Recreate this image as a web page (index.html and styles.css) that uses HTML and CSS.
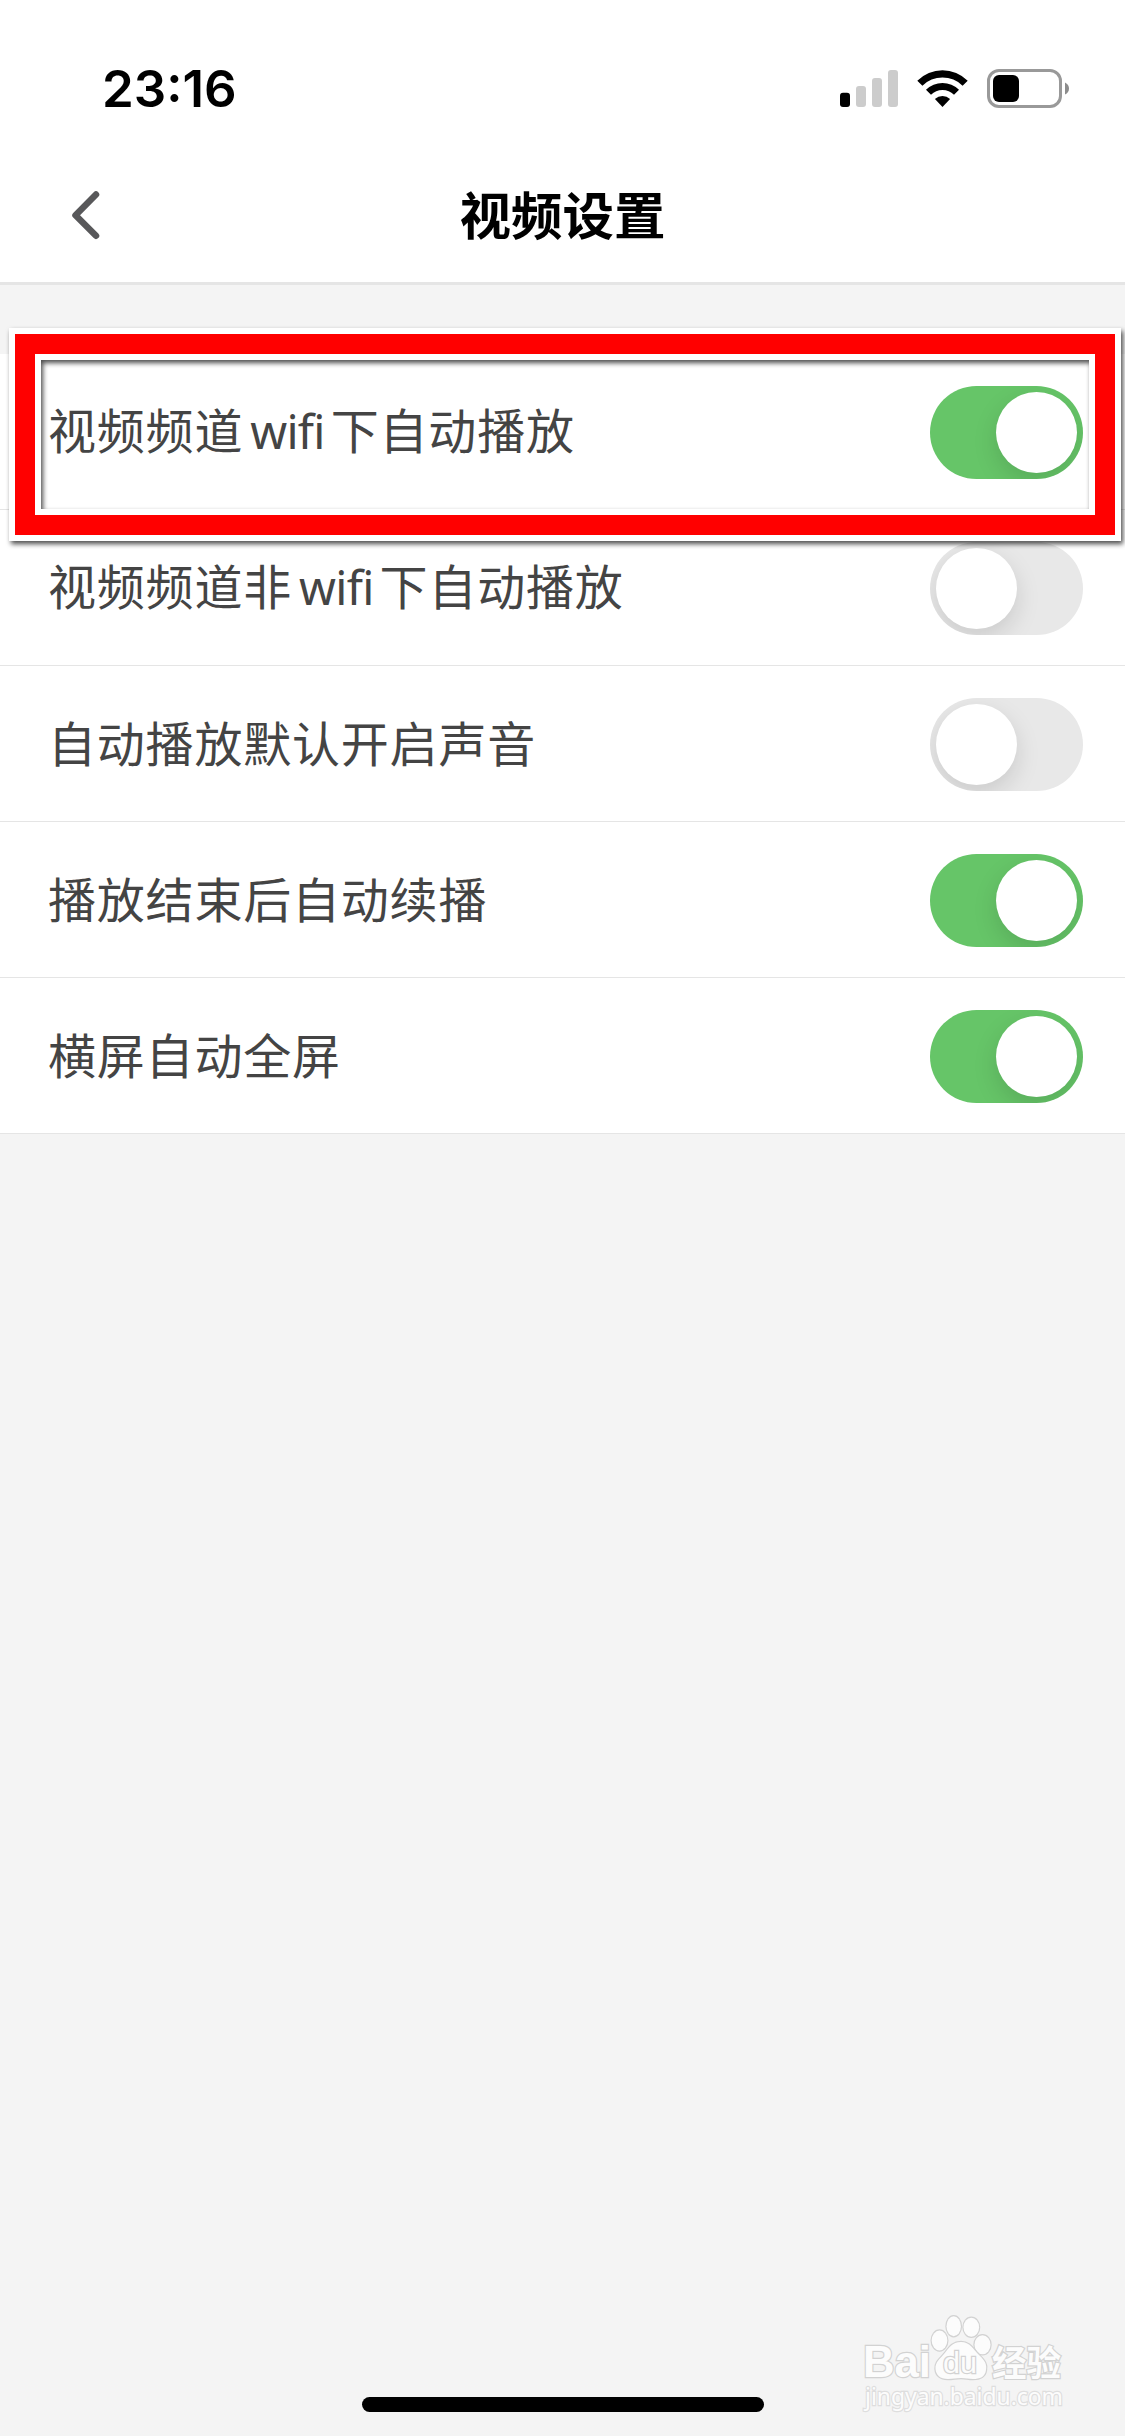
FILE: index.html
```html
<!DOCTYPE html>
<html lang="zh-CN">
<head>
<meta charset="utf-8">
<title>视频设置</title>
<link rel="stylesheet" href="styles.css">
</head>
<body>
<div class="screen">
  <header class="header">
    <div class="status">
      <span class="time">23:16</span>
      <svg class="status-icons" viewBox="0 0 230 40" aria-hidden="true">
        <rect x="0" y="23.7" width="10" height="14.3" rx="3"/>
        <g fill="#ccc">
          <rect x="16" y="17" width="10" height="21" rx="3"/>
          <rect x="32" y="9" width="10" height="29" rx="3"/>
          <rect x="48" y="1" width="10" height="37" rx="3"/>
        </g>
        <path d="M77.300 11.700A35.500 35.500 0 0 1 127.700 11.700L122.600 16.700A28.500 28.500 0 0 0 82.400 16.700Z"/>
        <path d="M86 20.800A23.500 23.500 0 0 1 119 20.800L114 25.800A16.300 16.300 0 0 0 91 25.800Z"/>
        <path d="M94.900 29.900A11.500 11.500 0 0 1 110.100 29.900L102.500 37.900Z"/>
        <rect x="148.500" y="1.500" width="72" height="36" rx="10.500" fill="none" stroke="#999" stroke-width="3"/>
        <rect x="153" y="6" width="26" height="27" rx="6"/>
        <path d="M225 13.500Q229 15.500 229 19.500T225 25.500Z" fill="#8c8c8c"/>
      </svg>
    </div>
    <div class="nav">
      <svg class="back" viewBox="0 0 40 60" aria-hidden="true"><path d="M29 9.500L8.500 30.200L29 50.800"/></svg>
      <h1 class="title">视频设置</h1>
      <span></span>
    </div>
  </header>

  <main class="list">
    <div class="row">
      <span class="label">视频频道<span class="latin">wifi</span>下自动播放</span>
      <span class="switch switch-on"></span>
      <div class="marker"><div class="marker-band"><div class="marker-inner"></div></div></div>
    </div>
    <div class="row">
      <span class="label">视频频道非<span class="latin">wifi</span>下自动播放</span>
      <span class="switch"></span>
    </div>
    <div class="row">
      <span class="label">自动播放默认开启声音</span>
      <span class="switch"></span>
    </div>
    <div class="row">
      <span class="label">播放结束后自动续播</span>
      <span class="switch switch-on"></span>
    </div>
    <div class="row">
      <span class="label">横屏自动全屏</span>
      <span class="switch switch-on"></span>
    </div>
  </main>

  <svg class="watermark" viewBox="0 0 220 110">
    <g class="mark">
      <text class="wm-latin" x="3" y="67" textLength="68" lengthAdjust="spacingAndGlyphs">Bai</text>
      <ellipse cx="79.500" cy="30.500" rx="7.800" ry="10"/>
      <ellipse cx="93.700" cy="16.300" rx="7.200" ry="10"/>
      <ellipse cx="111.300" cy="17.300" rx="7.800" ry="9.500"/>
      <ellipse cx="122.500" cy="34.700" rx="8" ry="9.500"/>
      <path d="M101 32C110 32 113 39 119 45C125 51 127 54 126 60C125 67 120 69 113 69C108 69 106 68 101 68C96 68 93 69 88 69C80 69 76 65 75.500 59C75 52 80 49 84 44C89 38 92 32 101 32Z"/>
      <text class="wm-du" x="83" y="63" textLength="34" lengthAdjust="spacingAndGlyphs">du</text>
      <text class="wm-cjk" x="132" y="66" textLength="69" lengthAdjust="spacingAndGlyphs">经验</text>
      <text class="wm-url" x="5" y="95" textLength="198" lengthAdjust="spacingAndGlyphs">jingyan.baidu.com</text>
    </g>
  </svg>
  <div class="home-bar"></div>
</div>
</body>
</html>
```
FILE: styles.css
```css
* { box-sizing: border-box; }

body {
  margin: 0;
  background: #f4f4f4;
  font-family: "Noto Sans CJK SC", sans-serif;
}

.screen {
  position: relative;
  display: flex;
  flex-direction: column;
  width: 1125px;
  height: 2436px;
  overflow: hidden;
  background: #f4f4f4;
}

.header {
  height: 285px;
  background: #fff;
  border-bottom: 3px solid #e5e5e5;
}

.status {
  display: flex;
  justify-content: space-between;
  align-items: flex-start;
  height: 150px;
  padding: 69px 55px 0 102px;
}

.time {
  margin-top: -10px;
  font: 600 51px/60px Inter, sans-serif;
}

.status-icons {
  width: 230px;
  height: 40px;
}

.nav {
  display: grid;
  grid-template-columns: 1fr auto 1fr;
  align-items: center;
  height: 132px;
  padding: 0 67px;
}

.back {
  width: 40px;
  height: 60px;
  margin-top: -2px;
  fill: none;
  stroke: #58585a;
  stroke-width: 6.5;
  stroke-linecap: round;
  stroke-linejoin: round;
}

.title {
  margin: -6px 0 0;
  font-size: 51.5px;
  line-height: 74px;
  font-weight: 700;
}

.list {
  margin-top: 69px;
  background: #fff;
}

.row {
  position: relative;
  display: flex;
  align-items: center;
  justify-content: space-between;
  height: 156px;
  padding: 1px 42px 0 48px;
  border-bottom: 1px solid #e5e5e5;
}

.label {
  padding-bottom: 6px;
  color: #444;
  font-size: 48px;
  line-height: 70px;
  letter-spacing: 0.8px;
}

.latin {
  margin: 0 6px 0 7px;
  font-family: "Noto Sans", sans-serif;
  font-size: 47px;
  letter-spacing: -0.7px;
}

.switch {
  display: flex;
  width: 153px;
  height: 93px;
  padding: 6px;
  overflow: hidden;
  border-radius: 47px;
  background: #e8e8e8;
}

.switch::before {
  content: "";
  width: 81px;
  height: 81px;
  border-radius: 50%;
  background: #fff;
  box-shadow: 0 9px 24px rgba(0, 0, 0, 0.13);
}

.switch-on {
  justify-content: flex-end;
  background: #66c568;
}

.marker {
  position: absolute;
  z-index: 1;
  top: -26px;
  left: 9px;
  width: 1112px;
  height: 213px;
  border: 6px solid #fff;
  filter: drop-shadow(2px 3px 2.5px rgba(0, 0, 0, 0.7));
}

.marker-band {
  height: 100%;
  border: 20px solid #f00;
}

.marker-inner {
  height: 100%;
  border: 6px solid #fff;
}

.home-bar {
  width: 402px;
  height: 15px;
  margin: auto auto 24px;
  border-radius: 8px;
  background: #000;
}

.watermark {
  position: absolute;
  left: 860px;
  top: 2310px;
  width: 220px;
  height: 110px;
}

.mark {
  fill: #fcfcfc;
  stroke: #d2d2d2;
  stroke-width: 2.4;
  paint-order: stroke;
}

.wm-latin {
  font: 700 45px "Liberation Sans", sans-serif;
}

.wm-du {
  font: 400 30px "Liberation Sans", sans-serif;
}

.wm-cjk {
  font: 700 35px "Noto Sans CJK SC", sans-serif;
}

.wm-url {
  font: 400 24px "Noto Sans", sans-serif;
  stroke: #dedede;
}
```
